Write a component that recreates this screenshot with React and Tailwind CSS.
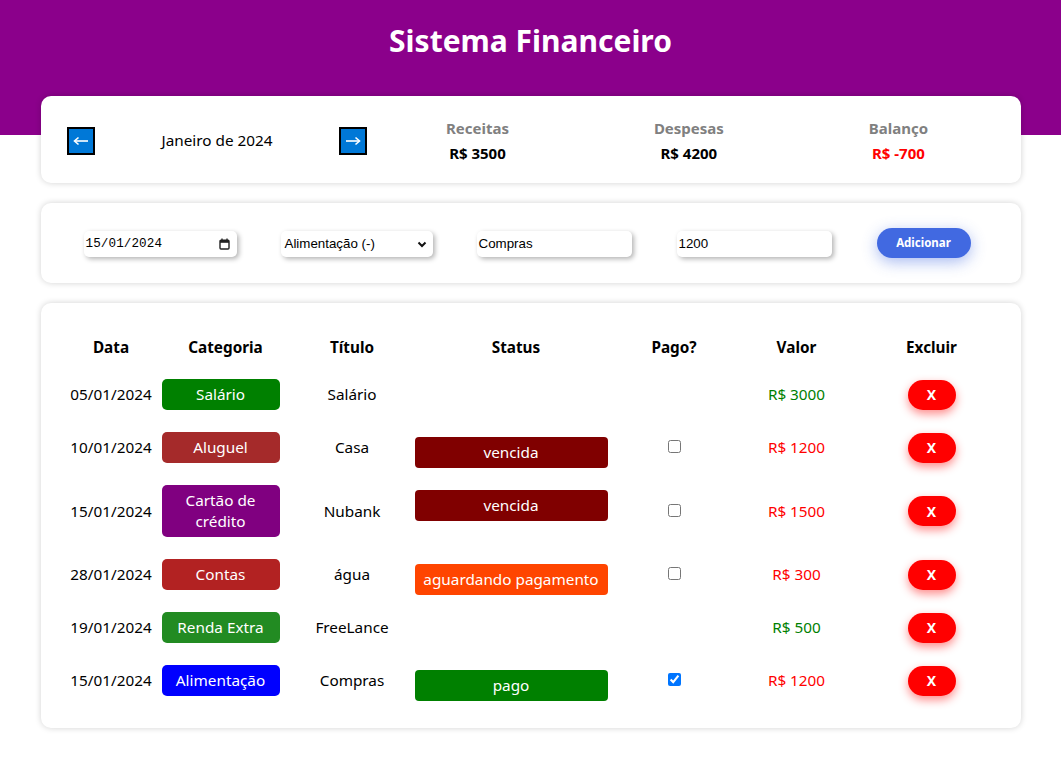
import React from "react";

const cols = "grid grid-cols-[101px_128px_125px_203px_113px_132px_138px]";

const rows = [
  { date: "05/01/2024", cat: "Salário", catBg: "bg-[#008000]", title: "Salário", status: null, value: "R$ 3000", income: true },
  { date: "10/01/2024", cat: "Aluguel", catBg: "bg-[#A52A2A]", title: "Casa", status: "vencida", statusBg: "bg-[#800000]", checked: false, value: "R$ 1200" },
  { date: "15/01/2024", cat: "Cartão de crédito", catBg: "bg-[#800080]", title: "Nubank", status: "vencida", statusBg: "bg-[#800000]", checked: false, value: "R$ 1500" },
  { date: "28/01/2024", cat: "Contas", catBg: "bg-[#B22222]", title: "água", status: "aguardando pagamento", statusBg: "bg-[#FF4500]", checked: false, value: "R$ 300" },
  { date: "19/01/2024", cat: "Renda Extra", catBg: "bg-[#228B22]", title: "FreeLance", status: null, value: "R$ 500", income: true },
  { date: "15/01/2024", cat: "Alimentação", catBg: "bg-[#0000FF]", title: "Compras", status: "pago", statusBg: "bg-[#008000]", checked: true, value: "R$ 1200" },
];

function ArrowBtn({ dir }) {
  return (
    <button className="w-[28px] h-[28px] bg-[#0078D7] border-2 border-black flex items-center justify-center p-0">
      <svg width="16" height="10" viewBox="0 0 16 10">
        {dir === "left" ? (
          <>
            <line x1="2" y1="5" x2="15" y2="5" stroke="white" strokeWidth="1.6" />
            <path d="M5.5 1.5 L1.5 5 L5.5 8.5" fill="none" stroke="white" strokeWidth="1.6" />
          </>
        ) : (
          <>
            <line x1="1" y1="5" x2="14" y2="5" stroke="white" strokeWidth="1.6" />
            <path d="M10.5 1.5 L14.5 5 L10.5 8.5" fill="none" stroke="white" strokeWidth="1.6" />
          </>
        )}
      </svg>
    </button>
  );
}

function Info({ label, value, red }) {
  return (
    <div className="flex flex-col items-center">
      <div className="text-[15px] font-bold text-[#808080] leading-[21px]">{label}</div>
      <div className={"text-[15px] font-bold leading-[21px] mt-[4px] " + (red ? "text-[#FF0000]" : "text-black")}>{value}</div>
    </div>
  );
}

const inputBox = "h-[26px] mt-[2px] bg-white rounded-[5px] shadow-[2px_2px_5px_rgba(0,0,0,0.3)] flex items-center";

export default function App() {
  return (
    <div className="min-h-[774px] bg-white font-['Segoe_UI','Noto_Sans',sans-serif] text-black">
      <header className="h-[135px] bg-[#8B008B] pt-[21px]">
        <h1 className="text-center text-white font-bold text-[30px] leading-[40px]">Sistema Financeiro</h1>
      </header>

      <main className="w-[980px] mx-auto -mt-[39px] flex flex-col gap-[20px]">
        {/* Summary card */}
        <section className="h-[87px] bg-white rounded-[10px] shadow-[0_0_6px_rgba(0,0,0,0.18)] flex items-center pl-[26px] pr-[20px] pt-[2px]">
          <div className="w-[301px] flex items-center justify-between">
            <ArrowBtn dir="left" />
            <div className="text-[15.3px] leading-[21px]">Janeiro de 2024</div>
            <ArrowBtn dir="right" />
          </div>
          <div className="flex-1 ml-[6px] flex justify-around">
            <Info label="Receitas" value="R$ 3500" />
            <Info label="Despesas" value="R$ 4200" />
            <Info label="Balanço" value="R$ -700" red />
          </div>
        </section>

        {/* Input card */}
        <section className="h-[80px] bg-white rounded-[10px] shadow-[0_0_6px_rgba(0,0,0,0.18)] flex items-center pl-[43px] font-['Liberation_Sans',Arial,sans-serif] text-[13.33px]">
          <div className={inputBox + " w-[153px] pl-[2px] pr-[7px] justify-between"}>
            <span className="font-['Liberation_Mono',monospace] text-[12.6px] tracking-[0.1px]">15/01/2024</span>
            <svg width="11" height="12" viewBox="0 0 11 12">
              <rect x="1" y="2.2" width="9" height="8.8" rx="1" fill="none" stroke="#222" strokeWidth="1.4" />
              <rect x="1" y="2.2" width="9" height="2.6" fill="#222" />
              <line x1="3" y1="0.5" x2="3" y2="2.5" stroke="#222" strokeWidth="1.3" />
              <line x1="8" y1="0.5" x2="8" y2="2.5" stroke="#222" strokeWidth="1.3" />
            </svg>
          </div>
          <div className={inputBox + " w-[152px] ml-[44px] pl-[4px] pr-[6px] justify-between"}>
            <span>Alimentação (-)</span>
            <svg width="10" height="7" viewBox="0 0 10 7">
              <path d="M1.5 1.5 L5 5 L8.5 1.5" fill="none" stroke="#111" strokeWidth="2" />
            </svg>
          </div>
          <div className={inputBox + " w-[155px] ml-[44px] pl-[2px]"}>
            <span>Compras</span>
          </div>
          <div className={inputBox + " w-[155px] ml-[45px] pl-[2px]"}>
            <span>1200</span>
          </div>
          <button className="ml-[45px] w-[94px] h-[30px] rounded-full bg-[#4169E1] text-white font-bold text-[11.5px] font-['Segoe_UI','Noto_Sans',sans-serif] shadow-[0_4px_15px_rgba(65,105,225,0.45)]">
            Adicionar
          </button>
        </section>

        {/* Table card */}
        <section className="bg-white rounded-[10px] shadow-[0_0_6px_rgba(0,0,0,0.18)] px-[20px] pt-[23px] pb-[21px]">
          <div className={cols + " h-[42px] items-center text-[15.3px] font-bold text-center"}>
            <div>Data</div>
            <div>Categoria</div>
            <div>Título</div>
            <div>Status</div>
            <div>Pago?</div>
            <div>Valor</div>
            <div>Excluir</div>
          </div>
          {rows.map((r, i) => (
            <div key={i} className={cols + " items-center py-[11px] text-[15.3px] leading-[21px] text-center"}>
              <div>{r.date}</div>
              <div>
                <div className={"w-[118px] rounded-[5px] py-[5px] px-[10px] text-white " + r.catBg}>{r.cat}</div>
              </div>
              <div>{r.title}</div>
              <div className="self-start">
                {r.status && (
                  <div className={"w-[193px] h-[31px] mt-[5px] -mb-[5px] rounded-[4px] flex items-center justify-center text-white " + r.statusBg}>
                    {r.status}
                  </div>
                )}
              </div>
              <div className="flex justify-center">
                {r.status && (
                  <input type="checkbox" readOnly checked={r.checked} className="w-[13px] h-[13px] m-0 -translate-y-[1px]" />
                )}
              </div>
              <div className={r.income ? "text-[#008000]" : "text-[#FF0000]"}>{r.value}</div>
              <div className="flex justify-center">
                <button className="w-[48px] h-[30px] rounded-[15px] bg-[#FF0000] text-white font-bold text-[14px] shadow-[0_4px_10px_rgba(255,0,0,0.45)]">
                  X
                </button>
              </div>
            </div>
          ))}
        </section>
      </main>
    </div>
  );
}
